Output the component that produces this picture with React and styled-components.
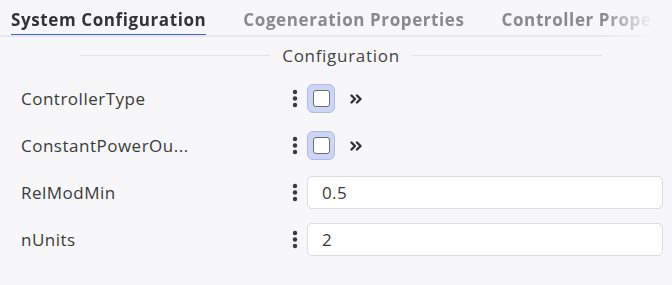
import React from "react";
import styled, { createGlobalStyle } from "styled-components";

const Global = createGlobalStyle`
  html, body { margin: 0; padding: 0; background: #f7f7f9; }
  body { font-family: "Open Sans", "Noto Sans", sans-serif; color: #3b3b3b; }
`;

const Page = styled.div`
  width: 672px;
  height: 285px;
  background: #f7f7f9;
  overflow: hidden;
`;

const TabBar = styled.div`
  width: 663px;
  height: 37px;
  box-sizing: border-box;
  display: flex;
  align-items: flex-end;
  gap: 37px;
  padding-left: 11px;
  border-bottom: 2px solid #e8e8ec;
  overflow: hidden;
  -webkit-mask-image: linear-gradient(to right, #000 91%, transparent 98.5%);
  mask-image: linear-gradient(to right, #000 91%, transparent 98.5%);
`;

const Tab = styled.div`
  flex: none;
  font-size: 17px;
  font-weight: 700;
  letter-spacing: 0.6px;
  white-space: nowrap;
  height: 37px;
  box-sizing: border-box;
  line-height: 28px;
  padding-top: 6px;
  color: ${(p) => (p.$active ? "#333" : "#8a8a8a")};
  border-bottom: 3px solid ${(p) => (p.$active ? "#4466cc" : "transparent")};
  margin-bottom: -2px;
`;

const Section = styled.div`
  margin: 0 9px 0 20px;
`;

const Legend = styled.div`
  display: flex;
  align-items: center;
  gap: 12px;
  padding: 0 61px 0 60px;
  height: 36px;
  font-size: 17px;
  letter-spacing: 0.7px;
  color: #444;
`;

const Line = styled.div`
  flex: 1;
  height: 1px;
  background: #e3e3e6;
`;

const Rows = styled.div`
  display: flex;
  flex-direction: column;
  gap: 14px;
  margin-top: 9px;
`;

const Row = styled.div`
  display: grid;
  grid-template-columns: 264px 23px 1fr;
  align-items: center;
  height: 33px;
`;

const Label = styled.div`
  font-size: 17px;
  letter-spacing: 0.5px;
  color: #3b3b3b;
  padding-left: 1px;
  white-space: nowrap;
`;

const Kebab = styled.div`
  display: flex;
  justify-content: center;
  padding-right: 1px;
  svg { display: block; }
`;

const Control = styled.div`
  display: flex;
  align-items: center;
  gap: 15px;
`;

const CheckHalo = styled.div`
  width: 28px;
  height: 29px;
  box-sizing: border-box;
  border-radius: 6px;
  background: #cdd5f4;
  border: 1px solid #aebbec;
  display: flex;
  align-items: center;
  justify-content: center;
`;

const CheckBox = styled.div`
  width: 17px;
  height: 17px;
  box-sizing: border-box;
  border: 1.5px solid #6e6e6e;
  border-radius: 3px;
  background: #fff;
`;

const Expand = styled.span`
  display: flex;
  svg { display: block; }
`;

const Input = styled.div`
  width: 356px;
  height: 33px;
  box-sizing: border-box;
  border: 1px solid #dcdcdf;
  border-radius: 5px;
  background: #fff;
  font-size: 17px;
  letter-spacing: 0.4px;
  color: #3b3b3b;
  padding-left: 14px;
  display: flex;
  align-items: center;
`;

const Dots = () => (
  <svg width="6" height="19" viewBox="0 0 6 19">
    <circle cx="3" cy="3" r="2.2" fill="#3a3a3a" />
    <circle cx="3" cy="9.5" r="2.2" fill="#3a3a3a" />
    <circle cx="3" cy="16" r="2.2" fill="#3a3a3a" />
  </svg>
);

const Chevrons = () => (
  <svg width="13" height="10" viewBox="0 0 13 10">
    <path d="M1.5 1.5 L5 5 L1.5 8.5 M7 1.5 L10.5 5 L7 8.5" fill="none" stroke="#333" strokeWidth="2.4" strokeLinecap="round" strokeLinejoin="round" />
  </svg>
);

const rows = [
  { label: "ControllerType", type: "check" },
  { label: "ConstantPowerOu...", type: "check" },
  { label: "RelModMin", type: "input", value: "0.5" },
  { label: "nUnits", type: "input", value: "2" },
];

export default function App() {
  return (
    <Page>
      <Global />
      <TabBar>
        <Tab $active>System Configuration</Tab>
        <Tab>Cogeneration Properties</Tab>
        <Tab>Controller Properties</Tab>
      </TabBar>
      <Section>
        <Legend>
          <Line />
          <span>Configuration</span>
          <Line />
        </Legend>
        <Rows>
          {rows.map((r) => (
            <Row key={r.label}>
              <Label>{r.label}</Label>
              <Kebab>
                <Dots />
              </Kebab>
              <Control>
                {r.type === "check" ? (
                  <>
                    <CheckHalo>
                      <CheckBox />
                    </CheckHalo>
                    <Expand>
                      <Chevrons />
                    </Expand>
                  </>
                ) : (
                  <Input>{r.value}</Input>
                )}
              </Control>
            </Row>
          ))}
        </Rows>
      </Section>
    </Page>
  );
}
